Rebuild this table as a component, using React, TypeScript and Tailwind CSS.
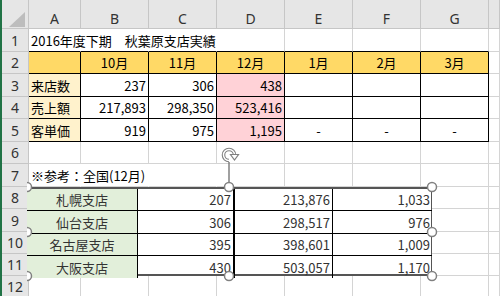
import React from "react";

type Cell = { text?: string; align?: "l" | "r" | "c"; fill?: string };

const LETTERS = ["A", "B", "C", "D", "E", "F", "G", ""];
const ROW_H = [23, 22, 23, 22, 23, 22, 23, 22, 23, 22, 22, 20];

const Y = "bg-[#ffd966]";
const LY = "bg-[#fff2cc]";
const PK = "bg-[#ffd2d7]";

const sheet: Cell[][] = [
  [{ text: "2016年度下期　秋葉原支店実績", align: "l" }],
  [
    { fill: Y },
    { text: "10月", align: "c", fill: Y },
    { text: "11月", align: "c", fill: Y },
    { text: "12月", align: "c", fill: Y },
    { text: "1月", align: "c", fill: Y },
    { text: "2月", align: "c", fill: Y },
    { text: "3月", align: "c", fill: Y },
  ],
  [
    { text: "来店数", align: "l", fill: LY },
    { text: "237", align: "r" },
    { text: "306", align: "r" },
    { text: "438", align: "r", fill: PK },
  ],
  [
    { text: "売上額", align: "l", fill: LY },
    { text: "217,893", align: "r" },
    { text: "298,350", align: "r" },
    { text: "523,416", align: "r", fill: PK },
  ],
  [
    { text: "客単価", align: "l", fill: LY },
    { text: "919", align: "r" },
    { text: "975", align: "r" },
    { text: "1,195", align: "r", fill: PK },
    { text: "-", align: "c" },
    { text: "-", align: "c" },
    { text: "-", align: "c" },
  ],
  [],
  [{ text: "※参考：全国(12月)", align: "l" }],
  [],
  [],
  [],
  [],
  [],
];

const picture = [
  ["札幌支店", "207", "213,876", "1,033"],
  ["仙台支店", "306", "298,517", "976"],
  ["名古屋支店", "395", "398,601", "1,009"],
  ["大阪支店", "430", "503,057", "1,170"],
];

function rightColor(r: number, c: number) {
  if (r >= 2 && r <= 5 && c <= 6) return "border-r-black";
  if ((r === 1 || r === 7) && c <= 2) return "border-r-white";
  return "border-r-[#d4d4d4]";
}

function bottomColor(r: number, c: number) {
  if (r >= 1 && r <= 5 && c <= 6) return "border-b-black";
  return "border-b-[#d4d4d4]";
}

function alignClass(a?: string) {
  if (a === "r") return "justify-end pr-[2px]";
  if (a === "c") return "justify-center";
  return "justify-start pl-[2px]";
}

export default function App() {
  const handles: [number, number][] = [
    [0, 158],
    [202, 158],
    [405, 158],
    [0, 203],
    [405, 203],
    [0, 247],
    [202, 247],
    [405, 247],
  ];

  return (
    <div className="relative w-[500px] h-[296px] overflow-hidden bg-white font-['Noto_Sans_CJK_JP','Noto_Sans',sans-serif] text-[13px] text-black">
      <div className="grid h-[296px] grid-cols-[27px_52px_68px_68px_68px_68px_68px_68px_1fr] grid-rows-[29px_23px_22px_23px_22px_23px_22px_23px_22px_23px_22px_22px_1fr] border-l-2 border-[#217346]">
        {/* corner */}
        <div className="relative bg-[#e6e6e6] border-r border-b border-[#c6c6c6]">
          <svg className="absolute left-0 top-0" width="25" height="29">
            <polygon points="7,27 23,27 23,12" fill="#bdbdbd" />
          </svg>
        </div>
        {LETTERS.map((l, i) => (
          <div
            key={"h" + i}
            className="flex items-center justify-center pt-[9px] bg-[#e6e6e6] border-r border-b border-[#c6c6c6] font-['Noto_Sans',sans-serif] text-[14px] text-[#333]"
          >
            {l}
          </div>
        ))}

        {ROW_H.map((_, ri) => {
          const r = ri + 1;
          const row = sheet[ri];
          return (
            <React.Fragment key={"r" + r}>
              <div className="flex items-center justify-center bg-[#e6e6e6] border-r border-b border-[#c6c6c6] font-['Noto_Sans',sans-serif] text-[14px] text-[#333]">
                {r}
              </div>
              {LETTERS.map((_, c) => {
                const cell = row[c] || {};
                return (
                  <div
                    key={"c" + r + "-" + c}
                    className={`relative flex items-center border-r border-b ${rightColor(r, c)} ${bottomColor(r, c)} ${cell.fill || "bg-white"} ${alignClass(cell.align)}`}
                  >
                    {cell.text && (
                      <span className="relative z-10 whitespace-nowrap leading-none">{cell.text}</span>
                    )}
                  </div>
                );
              })}
            </React.Fragment>
          );
        })}
      </div>

      {/* floating linked picture */}
      <div className="absolute left-[27px] top-[29px] right-0 bottom-0 overflow-hidden pointer-events-none">
        <div className="absolute left-0 top-[158px] w-[405px] h-[89px] grid grid-cols-[111px_97px_98px_99px] grid-rows-[22px_23px_22px_22px] bg-white border-t-2 border-b-2 border-r border-[#555] text-[#333]">
          {picture.map((row, ri) =>
            row.map((v, ci) => (
              <div
                key={ri + "-" + ci}
                className={`flex items-center ${ri < 3 ? "border-b border-b-black" : ""} ${
                  ci === 1 ? "border-r-2 border-r-black" : ci < 3 ? "border-r border-r-black" : ""
                } ${ci === 0 ? "justify-center bg-[#e2efda]" : "justify-end pr-[2px]"}`}
              >
                <span className="leading-none whitespace-nowrap">{v}</span>
              </div>
            ))
          )}
        </div>

        <svg className="absolute left-0 top-0" width="473" height="267">
          <line x1="202" y1="133" x2="202" y2="154" stroke="#808080" strokeWidth="1.5" />
          {/* rotate handle: outlined circular arrow */}
          <path d="M 202 131.5 A 5.5 5.5 0 1 1 207.5 126" fill="none" stroke="#808080" strokeWidth="3.6" />
          <path d="M 202 131.5 A 5.5 5.5 0 1 1 207.5 126" fill="none" stroke="#ffffff" strokeWidth="1.4" />
          <polygon points="203.5,125.5 211.5,125.5 207.5,131" fill="#ffffff" stroke="#808080" strokeWidth="1.2" />
          {handles.map(([x, y], i) => (
            <circle key={i} cx={x} cy={y} r="4.5" fill="white" stroke="#808080" strokeWidth="1.5" />
          ))}
        </svg>
      </div>
    </div>
  );
}
